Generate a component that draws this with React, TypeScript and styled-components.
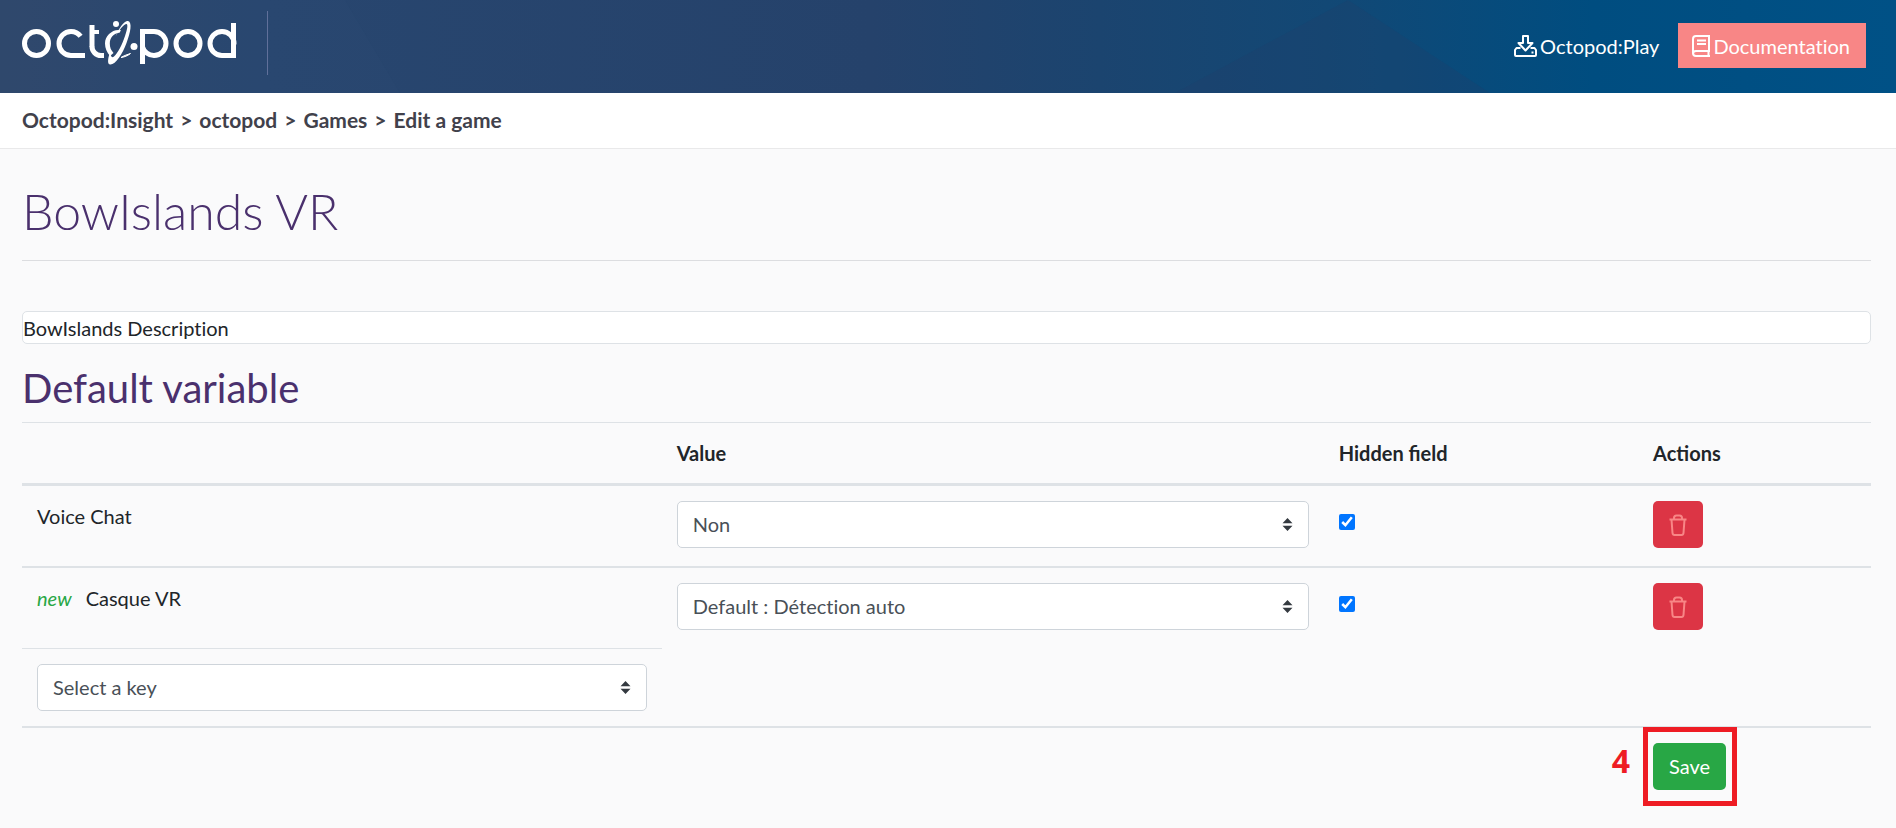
import React, { useState } from 'react';
import styled, { createGlobalStyle } from 'styled-components';

const GlobalStyle = createGlobalStyle`
  *, *::before, *::after { box-sizing: border-box; }
  body {
    margin: 0;
    background: #fafafb;
    color: #212529;
    font-family: Lato, "Open Sans", sans-serif;
    font-size: 20px;
    line-height: 30px;
    font-variant-ligatures: none;
  }
`;

const Header = styled.header`
  position: relative;
  display: flex;
  align-items: flex-start;
  justify-content: space-between;
  padding: 11px 30px 18px 22px;
  background: linear-gradient(90deg, #31476a 0%, #28466f 14%, #25426b 46%, #1b446f 58%, #124875 70%, #004d80 84%, #005186 100%);
`;

const HeaderFacets = styled.svg`
  position: absolute;
  inset: 0;
  width: 100%;
  height: 100%;
`;

const Brand = styled.a`
  position: relative;
  display: flex;
  padding-right: 30px;
  border-right: 1px solid #60709a;
`;

const HeaderNav = styled.nav`
  position: relative;
  display: flex;
  align-items: center;
  gap: 19px;
  padding-top: 12px;
`;

const NavLink = styled.a<{ $filled?: boolean }>`
  display: flex;
  align-items: center;
  gap: 3px;
  height: 45px;
  padding: ${p => (p.$filled ? '0 16px 0 14px' : '0')};
  background: ${p => (p.$filled ? '#f88686' : 'transparent')};
  color: #fff;
  text-decoration: none;
`;

const Breadcrumb = styled.nav`
  padding: 12px 22px 13px;
  background: #fff;
  border-bottom: 1px solid #e9e9ea;
  color: #41414b;
  font-size: 21px;
  font-weight: 700;

  ol { display: flex; gap: 7px; margin: 0; padding: 0; list-style: none; }
  li { display: flex; gap: 7px; }
  li + li::before { content: ">"; }
  a { color: inherit; text-decoration: none; }
`;

const Main = styled.main`
  padding: 32px 25px 22px 22px;
`;

const Title = styled.h1`
  margin: 0;
  padding-bottom: 19px;
  border-bottom: 1px solid #dcdde0;
  color: #4a306d;
  font-size: 50px;
  font-weight: 300;
  line-height: 60px;
`;

const Description = styled.input`
  display: block;
  width: 100%;
  height: 33px;
  margin: 50px 0 20px;
  padding: 0;
  border: 1px solid #dee2e6;
  border-radius: 5px;
  background: #fff;
  color: #212529;
  font: inherit;
  font-variant-ligatures: none;
`;

const SectionTitle = styled.h2`
  margin: 0 0 10px;
  color: #4a306d;
  font-size: 40px;
  font-weight: 400;
  line-height: 48px;
`;

const Table = styled.table`
  width: 100%;
  table-layout: fixed;
  border-collapse: separate;
  border-spacing: 0;
`;

const Col = styled.col<{ $share: number }>`
  width: ${p => p.$share}%;
`;

const HeadCell = styled.th`
  padding: 15px;
  border-top: 1px solid #dee2e6;
  border-bottom: 3px solid #dee2e6;
  text-align: left;
  font-weight: 700;
  font-variant-ligatures: normal;
`;

const Cell = styled.td<{ $line?: number; $compact?: boolean }>`
  box-sizing: content-box;
  height: ${p => (p.$compact ? '62px' : '65px')};
  padding: 15px 15px 0;
  border-bottom: ${p => p.$line || 0}px solid #dee2e6;
  vertical-align: top;
`;

const NewMark = styled.em`
  margin-right: 14px;
  color: #28a745;
`;

const SelectBox = styled.div`
  position: relative;

  select {
    display: block;
    width: 100%;
    height: 47px;
    padding: 0 35px 2px 15px;
    border: 1px solid #ced4da;
    border-radius: 5px;
    background: #fff;
    color: #495057;
    font: inherit;
    font-variant-ligatures: none;
    appearance: none;
  }
  svg {
    position: absolute;
    top: 17px;
    right: 16px;
    pointer-events: none;
  }
`;

const HiddenToggle = styled.input`
  display: block;
  width: 16px;
  height: 16px;
  margin: 13px 0 0;
  accent-color: #0075ff;
`;

const DeleteButton = styled.button`
  display: flex;
  align-items: center;
  justify-content: center;
  width: 50px;
  height: 47px;
  padding: 0;
  border: 0;
  border-radius: 5px;
  background: #dc3545;
  color: #f88686;
`;

const SaveArea = styled.div`
  position: relative;
  display: inline-block;
`;

const SaveButton = styled.button`
  display: block;
  height: 47px;
  padding: 0 16px 2px;
  border: 0;
  border-radius: 5px;
  background: #28a745;
  color: #fff;
  font: inherit;
`;

const StepFrame = styled.span`
  position: absolute;
  inset: -16px -11px -16px -10px;
  border: 5px solid #ee1c24;
  pointer-events: none;
`;

const StepNumber = styled.span`
  position: absolute;
  top: 0;
  right: 100%;
  margin-right: 23px;
  color: #ee1c24;
  font-family: "Open Sans", "Noto Sans", sans-serif;
  font-size: 32px;
  font-weight: 700;
  line-height: 36px;
`;

const OctopodLogo = () => (
  <svg width="215" height="64" viewBox="22 11 215 64" fill="none" stroke="#fff" strokeWidth="5" role="img" aria-label="octopod">
    <circle cx="36.5" cy="43.5" r="12" />
    <circle cx="71" cy="43.5" r="12" strokeDasharray="48.5 30" transform="rotate(90 71 43.5)" />
    <line x1="71" y1="55.5" x2="85" y2="55.5" />
    <line x1="92" y1="25" x2="92" y2="47" />
    <line x1="92" y1="32" x2="99" y2="32" strokeWidth="4" />
    <circle cx="101" cy="46.5" r="9" strokeDasharray="14.2 50" transform="rotate(90 101 46.5)" />
    <line x1="101" y1="55.5" x2="104" y2="55.5" />
    <path d="M121 30.300C113 28.500 105 35.500 105 43.500C105 48.500 107 52.500 110 56L113.500 53C111 50 109.800 47.500 109.800 43.500C109.800 37.500 114 33 119.500 32.800Z" fill="#fff" stroke="none" />
    <path fillRule="evenodd" d="M128 21C132.500 22 130.500 32.500 126.500 43C122.500 54 115.500 65 110 64.500C106.500 64 108.500 56 110.500 51C110.500 56 111.500 58.500 114 56.500C118 53 122 45 125 36C127.500 28.500 128 24.500 126.500 24C124 24 119 30 115.500 36.500C118.500 28.500 124.500 20.500 128 21Z" fill="#fff" stroke="none" />
    <path d="M121 57.500C125 57 128 55.500 130.500 53.500C127.500 54.500 124 55.500 121 57.500Z" fill="#fff" strokeWidth="1" />
    <circle cx="116" cy="24" r="3" fill="#fff" stroke="none" />
    <circle cx="134" cy="46.500" r="3.500" fill="#fff" stroke="none" />
    <line x1="142.500" y1="29" x2="142.500" y2="64" />
    <line x1="140" y1="31.500" x2="154" y2="31.500" />
    <circle cx="154" cy="43.500" r="12" strokeDasharray="53 30" transform="rotate(-90 154 43.500)" />
    <circle cx="188" cy="43.500" r="12" />
    <circle cx="222" cy="43.500" r="12" strokeDasharray="57 20" transform="rotate(90 222 43.500)" />
    <line x1="222" y1="55.500" x2="236" y2="55.500" />
    <line x1="233.500" y1="23" x2="233.500" y2="58" />
  </svg>
);

const DownloadIcon = () => (
  <svg width="23" height="22" viewBox="0 0 23 22" fill="none" stroke="currentColor" strokeWidth="2" strokeLinejoin="round" aria-hidden="true">
    <path d="M9 1h5v7h4.500L11.500 15.500 4.500 8H9z" />
    <path d="M6.500 13H2.500L1 15v5q0 1 1 1h19q1 0 1-1v-5l-1.500-2H16.500" />
    <path d="M17.500 17.500h2" />
  </svg>
);

const BookIcon = () => (
  <svg width="18" height="22" viewBox="0 0 18 22" fill="none" stroke="currentColor" strokeWidth="2" aria-hidden="true">
    <path d="M17 1H4Q1 1 1 4v14q0 3 3 3h14" />
    <path d="M17 0v16H4q-3 0-3 2.500M16.500 16v5" />
    <path d="M5 5.500h9M5 9h9" />
  </svg>
);

const TrashIcon = () => (
  <svg width="18" height="22" viewBox="0 0 18 22" fill="none" stroke="currentColor" strokeWidth="2" strokeLinejoin="round" aria-hidden="true">
    <path d="M0.500 5.500h17M5 5.500V4q0-2.500 2.500-2.500h3Q13 1.500 13 4v1.500" />
    <path d="M2.500 5.500l1 13.500q.200 2 2 2h7q1.800 0 2-2l1-13.500" />
  </svg>
);

const Arrows = () => (
  <svg width="11" height="13" viewBox="0 0 11 13" fill="#343a40" aria-hidden="true">
    <path d="M0.500 5.200h10L5.500 0zM0.500 7.800h10L5.500 13z" />
  </svg>
);

type SelectProps = { label: string; options: string[] };

const Select = ({ label, options }: SelectProps) => (
  <SelectBox>
    <select aria-label={label}>
      {options.map(option => (
        <option key={option}>{option}</option>
      ))}
    </select>
    <Arrows />
  </SelectBox>
);

const crumbs = ['Octopod:Insight', 'octopod', 'Games', 'Edit a game'];

const variables = [
  { name: 'Voice Chat', isNew: false, options: ['Non', 'Oui'] },
  { name: 'Casque VR', isNew: true, options: ['Default : Détection auto'] },
];

export default function App() {
  const [description, setDescription] = useState('BowIslands Description');

  return (
    <>
      <GlobalStyle />
      <Header>
        <HeaderFacets viewBox="0 0 1896 93" preserveAspectRatio="none" aria-hidden="true">
          <path d="M0 0H345L400 93H0Z" fill="#2d4c74" opacity=".25" />
          <path d="M1348 0L1175 93H1490Z" fill="#20406a" opacity=".3" />
        </HeaderFacets>
        <Brand href="#home">
          <OctopodLogo />
        </Brand>
        <HeaderNav aria-label="Main">
          <NavLink href="#play">
            <DownloadIcon />
            Octopod:Play
          </NavLink>
          <NavLink href="#documentation" $filled>
            <BookIcon />
            Documentation
          </NavLink>
        </HeaderNav>
      </Header>
      <Breadcrumb aria-label="Breadcrumb">
        <ol>
          {crumbs.map(crumb => (
            <li key={crumb}>
              <a href="#crumb">{crumb}</a>
            </li>
          ))}
        </ol>
      </Breadcrumb>
      <Main>
        <Title>BowIslands VR</Title>
        <Description
          aria-label="Description"
          value={description}
          onChange={event => setDescription(event.target.value)}
        />
        <SectionTitle>Default variable</SectionTitle>
        <Table>
          <colgroup>
            <Col $share={34.6} />
            <Col $share={35.8} />
            <Col $share={17} />
            <Col $share={12.6} />
          </colgroup>
          <thead>
            <tr>
              <HeadCell />
              <HeadCell scope="col">Value</HeadCell>
              <HeadCell scope="col">Hidden field</HeadCell>
              <HeadCell scope="col">Actions</HeadCell>
            </tr>
          </thead>
          <tbody>
            {variables.map(({ name, isNew, options }) => {
              const line = isNew ? 0 : 2;
              return (
                <tr key={name}>
                  <Cell $line={isNew ? 1 : 2}>
                    {isNew && <NewMark>new</NewMark>}
                    {name}
                  </Cell>
                  <Cell $line={line}>
                    <Select label={name} options={options} />
                  </Cell>
                  <Cell $line={line}>
                    <HiddenToggle type="checkbox" defaultChecked aria-label={`Hide ${name}`} />
                  </Cell>
                  <Cell $line={line}>
                    <DeleteButton type="button" aria-label={`Delete ${name}`}>
                      <TrashIcon />
                    </DeleteButton>
                  </Cell>
                </tr>
              );
            })}
            <tr>
              <Cell $line={2} $compact>
                <Select label="Key" options={['Select a key']} />
              </Cell>
              <Cell $line={2} $compact colSpan={3} />
            </tr>
          </tbody>
          <tfoot>
            <tr>
              <Cell colSpan={3} />
              <Cell>
                <SaveArea>
                  <StepNumber>4</StepNumber>
                  <SaveButton type="button">Save</SaveButton>
                  <StepFrame />
                </SaveArea>
              </Cell>
            </tr>
          </tfoot>
        </Table>
      </Main>
    </>
  );
}
